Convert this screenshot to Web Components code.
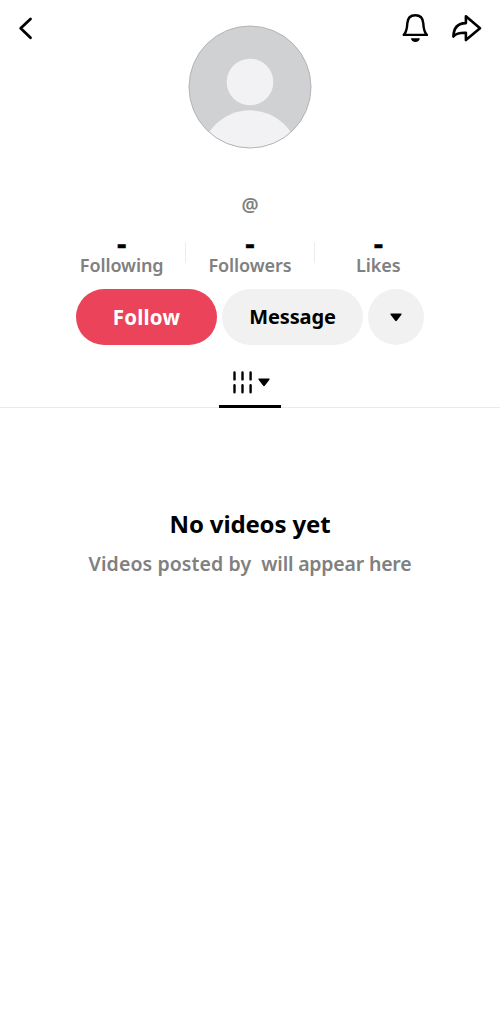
<!DOCTYPE html>
<html lang="en">
<head>
<meta charset="utf-8">
<title>Profile</title>
<style>
html,body{margin:0;background:#fff}
body{font-family:"Noto Sans","Open Sans",sans-serif;color:#000;min-height:1022px}
</style>
</head>
<body>
<profile-page></profile-page>
<script>
const define = (name, html) => {
  const t = document.createElement('template');
  t.innerHTML = html;
  customElements.define(name, class extends HTMLElement {
    constructor() {
      super();
      this.attachShadow({mode: 'open'}).append(t.content.cloneNode(true));
    }
  });
};

define('user-avatar', `<style>:host{display:block;width:124px;height:124px}svg{display:block}</style>
<svg width="124" height="124" viewBox="0 0 124 124">
<defs><clipPath id="c"><circle cx="62" cy="62" r="61"/></clipPath></defs>
<circle cx="62" cy="62" r="61" fill="#d0d1d3"/>
<g clip-path="url(#c)" fill="#f2f2f5"><circle cx="62" cy="57" r="23.3"/><circle cx="62" cy="134" r="48.7"/></g>
<circle cx="62" cy="62" r="61" fill="none" stroke="#b4b4b6" stroke-width="1"/></svg>`);

define('profile-header', `<style>
:host{display:grid;grid-template-columns:1fr 124px 1fr;height:149px}
svg{display:block}.back{padding:16px 0 0 18px}
user-avatar{margin-top:25px}
.actions{display:flex;justify-content:flex-end;gap:21px;padding:12px 18px 0 0}</style>
<div class="back"><svg width="16" height="24" viewBox="0 0 16 24" fill="none" stroke="#000" stroke-width="2.8" stroke-linecap="round" stroke-linejoin="round"><path d="M12.5 3 2.7 12.3l9.8 9.4"/></svg></div>
<user-avatar></user-avatar>
<div class="actions">
<svg width="28" height="32" viewBox="0 0 28 32"><path d="M13.3 3.2c-5 0-7.7 3.2-8 8.2-.3 5.5-.7 8-2.7 10.3l-.9 1.2h23.2l-.9-1.2c-2-2.3-2.4-4.8-2.7-10.3-.3-5-3-8.2-8-8.2Z" fill="none" stroke="#000" stroke-width="2.4" stroke-linejoin="round"/><path d="M8.9 26.2h9c-.5 2.5-2.1 3.8-4.5 3.8s-4-1.3-4.5-3.8Z"/></svg>
<svg width="31" height="30" viewBox="0 0 31 30" fill="none" stroke="#000" stroke-width="2.6" stroke-linejoin="round"><path d="M14.9 4.2 29 16.3 14.9 28v-7.2C9 20.6 5.2 21.3 2.4 24.5c.2-8 4.3-13.2 12.5-13.4Z"/></svg>
</div>`);

define('stat-item', `<style>
:host{display:flex;flex-direction:column;align-items:center;flex:1}
.n{font-family:"DejaVu Sans",sans-serif;font-weight:700;font-size:25px;line-height:29px;height:22px;-webkit-text-stroke:.4px #000}
.l{color:#808080;font-weight:600;font-size:18px;letter-spacing:-.1px;line-height:26px;white-space:pre}</style>
<div class="n"><slot name="value"></slot></div><div class="l"><slot></slot></div>`);

define('stat-row', `<style>:host{display:flex;width:384px;margin:13px 0 0 58px;height:46px}
::slotted(i){width:1px;height:21px;background:#ececec;margin-top:12px}</style><slot></slot>`);

define('pill-button', `<style>
:host{display:flex;align-items:center;justify-content:center;width:141px;height:56px;border-radius:28px;background:#f1f1f1;font-weight:700;font-size:20px;letter-spacing:-.1px;line-height:28px}
:host([primary]){background:#ea435a;color:#fff;font-size:20.5px;letter-spacing:.2px}
:host([round]){width:56px}</style><slot></slot>`);

define('caret-icon', `<style>:host{display:block;width:12px;height:9px}svg{display:block}</style>
<svg width="12" height="9" viewBox="0 0 12 9"><path d="M1.2.6h9.6c.7 0 1 .6.6 1.1L6.8 7.8q-.8.9-1.6 0L.6 1.7C.2 1.2.5.6 1.2.6Z"/></svg>`);

define('grid-tab', `<style>
:host{display:flex;justify-content:center;height:55px;margin-top:7px;border-bottom:1px solid #eaeaea}
.tab{box-sizing:border-box;width:62px;height:56px;border-bottom:3px solid #000;display:flex;justify-content:center;padding-top:18px;gap:6px}
caret-icon{margin-top:8px}svg{display:block}</style>
<div class="tab"><svg width="21" height="25" viewBox="0 0 21 25" stroke="#000" stroke-width="2.4" stroke-linecap="round"><path d="M3.5 2.4v7M11.5 2.4v7M19.6 2.4v7M3.5 15.2v7M11.5 15.2v7M19.6 15.2v7"/></svg><caret-icon></caret-icon></div>`);

define('empty-state', `<style>
:host{display:block;text-align:center;margin-top:100px}
.t{font-size:24px;letter-spacing:-.15px;line-height:32px;font-weight:700}
.s{margin-top:10px;color:#808080;font-size:19.5px;letter-spacing:.1px;line-height:28px;font-weight:600;white-space:pre}
::slotted(.tail){letter-spacing:-.2px}</style>
<div class="t"><slot name="title"></slot></div><div class="s"><slot></slot></div>`);

define('profile-page', `<style>
:host{display:block;width:500px;margin:0 auto}
.handle{margin-top:44px;text-align:center;font-size:19px;line-height:24px;font-weight:600;color:#808080}
.buttons{display:flex;justify-content:center;gap:5px;margin-top:13px}</style>
<profile-header></profile-header>
<div class="handle">@</div>
<stat-row>
<stat-item><span slot="value">-</span>Following</stat-item><i></i>
<stat-item><span slot="value">-</span>Followers</stat-item><i></i>
<stat-item><span slot="value">-</span>Likes</stat-item>
</stat-row>
<div class="buttons"><pill-button primary>Follow</pill-button><pill-button>Message</pill-button><pill-button round><caret-icon></caret-icon></pill-button></div>
<grid-tab></grid-tab>
<empty-state><span slot="title">No videos yet</span>Videos posted by <span class="tail"> will appear here</span></empty-state>`);
</script>
</body>
</html>
